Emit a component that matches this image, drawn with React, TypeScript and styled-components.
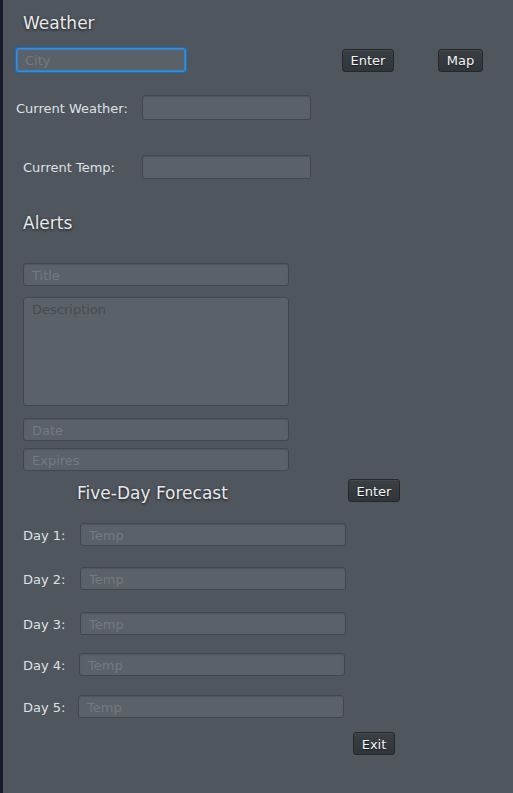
import React from "react";
import styled, { createGlobalStyle } from "styled-components";

const Global = createGlobalStyle`
  html, body { margin: 0; padding: 0; background: #50565d; }
  body { font-family: "DejaVu Sans", "Noto Sans", sans-serif; }
  * { box-sizing: border-box; }
`;

const Window = styled.div`
  width: 513px;
  height: 793px;
  background: #50565d;
  border-left: 3px solid #1b1a2c;
  display: flex;
  flex-direction: column;
  color: #dfe3e7;
  font-size: 13px;
  overflow: hidden;
`;

const Heading = styled.div<{ $top: number; $left: number; $w?: number }>`
  margin-top: ${(p) => p.$top}px;
  margin-left: ${(p) => p.$left}px;
  ${(p) => (p.$w ? `width: ${p.$w}px; flex: none;` : "")}
  font-size: 17px;
  line-height: 24px;
  height: 24px;
  color: #e6e9ec;
  text-shadow: 0 1px 3px rgba(0, 0, 0, 0.75);
`;

const Row = styled.div<{ $top: number; $left: number; $h?: number }>`
  display: flex;
  align-items: center;
  margin-top: ${(p) => p.$top}px;
  margin-left: ${(p) => p.$left}px;
  height: ${(p) => p.$h ?? 23}px;
`;

const Label = styled.span<{ $w: number }>`
  width: ${(p) => p.$w}px;
  flex: none;
  padding-top: 1px;
  color: #dde1e5;
  white-space: nowrap;
`;

const Field = styled.input<{ $w: number; $h?: number; $focus?: boolean }>`
  flex: none;
  width: ${(p) => p.$w}px;
  height: ${(p) => p.$h ?? 23}px;
  margin: 0;
  padding: 1px 8px 0;
  font-family: inherit;
  font-size: 13px;
  color: #e0e3e6;
  background: #5a6168;
  border: 1px solid ${(p) => (p.$focus ? "#2f8ee0" : "#42474d")};
  box-shadow: ${(p) =>
    p.$focus
      ? "0 0 0 1px #1d6fb8, inset 0 0 0 1px #3b7fbd"
      : "inset 0 1px 1px rgba(0,0,0,0.12)"};
  border-radius: 3px;
  outline: none;
  &::placeholder { color: #737a81; }
`;

const Area = styled.textarea<{ $w: number; $h: number }>`
  display: block;
  width: ${(p) => p.$w}px;
  height: ${(p) => p.$h}px;
  margin: 0;
  padding: 3px 8px;
  font-family: inherit;
  font-size: 13px;
  line-height: 18px;
  resize: none;
  color: #e0e3e6;
  background: #5a6168;
  border: 1px solid #42474d;
  border-radius: 3px;
  outline: none;
  &::placeholder { color: #464c52; }
`;

const Button = styled.button<{ $w: number; $ml?: number }>`
  flex: none;
  width: ${(p) => p.$w}px;
  height: 23px;
  margin: 0 0 0 ${(p) => p.$ml ?? 0}px;
  padding: 1px 0 0;
  font-family: inherit;
  font-size: 13px;
  color: #f2f4f6;
  background: linear-gradient(#3a3f44, #30353a);
  border: 1px solid #24282c;
  border-radius: 3px;
  box-shadow: inset 0 1px 0 rgba(255, 255, 255, 0.06);
  text-shadow: 0 1px 1px rgba(0, 0, 0, 0.5);
`;

const Stack = styled.div<{ $top: number; $left: number }>`
  display: flex;
  flex-direction: column;
  margin-top: ${(p) => p.$top}px;
  margin-left: ${(p) => p.$left}px;
`;

const Gap = styled.div<{ $h: number }>`
  height: ${(p) => p.$h}px;
  flex: none;
`;

const days = [
  { top: 21, lw: 57 },
  { top: 21, lw: 57 },
  { top: 22, lw: 57 },
  { top: 18, lw: 56 },
  { top: 19, lw: 55 },
];

export default function App() {
  return (
    <>
      <Global />
      <Window>
        <Heading $top={11} $left={20}>Weather</Heading>
        <Row $top={13} $left={13} $h={24}>
          <Field $w={170} $h={24} $focus placeholder="City" />
          <Button $w={52} $ml={156}>Enter</Button>
          <Button $w={45} $ml={44}>Map</Button>
        </Row>
        <Row $top={23} $left={13} $h={25}>
          <Label $w={126}>Current Weather:</Label>
          <Field $w={169} $h={25} />
        </Row>
        <Row $top={35} $left={20} $h={24}>
          <Label $w={119}>Current Temp:</Label>
          <Field $w={169} $h={24} />
        </Row>
        <Heading $top={32} $left={20}>Alerts</Heading>
        <Stack $top={28} $left={20}>
          <Field $w={266} placeholder="Title" />
          <Gap $h={11} />
          <Area $w={266} $h={109} placeholder="Description" />
          <Gap $h={12} />
          <Field $w={266} placeholder="Date" />
          <Gap $h={7} />
          <Field $w={266} placeholder="Expires" />
        </Stack>
        <Row $top={8} $left={74}>
          <Heading $top={5} $left={0} $w={271}>Five-Day Forecast</Heading>
          <Button $w={52}>Enter</Button>
        </Row>
        {days.map((d, i) => (
          <Row key={i} $top={d.top} $left={20}>
            <Label $w={d.lw}>Day {i + 1}:</Label>
            <Field $w={266} placeholder="Temp" />
          </Row>
        ))}
        <Row $top={14} $left={350}>
          <Button $w={42}>Exit</Button>
        </Row>
      </Window>
    </>
  );
}
